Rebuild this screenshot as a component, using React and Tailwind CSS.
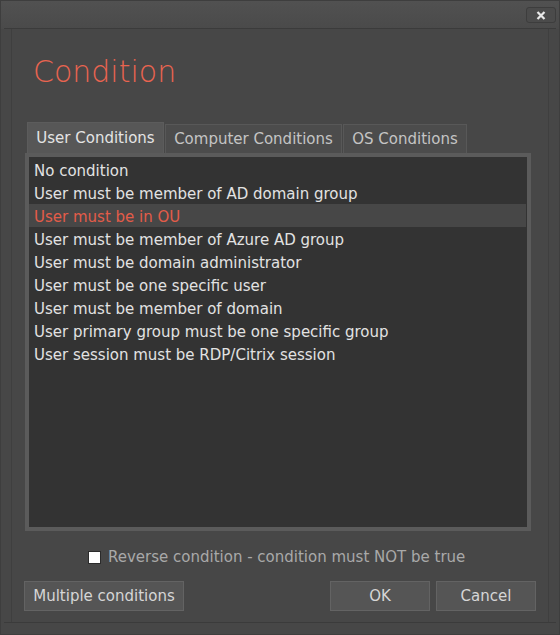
import { useState } from 'react';

const items = [
  'No condition',
  'User must be member of AD domain group',
  'User must be in OU',
  'User must be member of Azure AD group',
  'User must be domain administrator',
  'User must be one specific user',
  'User must be member of domain',
  'User primary group must be one specific group',
  'User session must be RDP/Citrix session',
];

const tabs = [
  { label: 'User Conditions', w: 'w-[137px]' },
  { label: 'Computer Conditions', w: 'w-[177px]' },
  { label: 'OS Conditions', w: 'w-[124px]' },
];

export default function App() {
  const [tab, setTab] = useState(0);
  const [sel, setSel] = useState(2);
  const [reverse, setReverse] = useState(false);

  return (
    <div className="w-[560px] h-[635px] flex flex-col bg-[#474747] border border-[#3e3e3e] text-[15px] text-[#e2e2e2] select-none" style={{ fontFamily: '"DejaVu Sans", sans-serif' }}>
      {/* title bar */}
      <div className="h-[28px] px-[3px] bg-gradient-to-b from-[#515151] to-[#4a4a4a]">
        <div className="h-full flex justify-end items-start border-b border-[#3b3b3b]">
          <button className="mt-[6px] mr-[0px] w-[30px] h-[16px] rounded-[3px] border border-[#3d3d3d] bg-[#4b4b4b] flex items-center justify-center">
            <svg width="10" height="9" viewBox="0 0 10 9">
              <path d="M1.5 1 L8.5 8 M8.5 1 L1.5 8" stroke="#e8e8e8" strokeWidth="2.2" />
            </svg>
          </button>
        </div>
      </div>

      {/* body */}
      <div className="flex-1 px-[3px] flex">
        <div className="flex-1 flex border-b border-[#3b3b3b] mb-[11px]">
          <div className="flex-1 mx-[7px] border-x border-[#3f3f3f] flex flex-col">
            <h1 className="ml-[21px] mt-[21px] text-[30px] leading-[44px] font-extralight text-[#ea6450]">Condition</h1>

            {/* tabs */}
            <div className="ml-[15px] mt-[28px] flex items-end gap-[1px] h-[31px]">
              {tabs.map((t, i) => (
                <button
                  key={t.label}
                  onClick={() => setTab(i)}
                  className={`${t.w} flex items-center justify-center border border-b-0 ${
                    i === tab ? 'h-[31px] bg-[#575757] border-[#5c5c5c] text-[#e4e4e4]' : 'h-[29px] bg-[#4c4c4c] border-[#585858] text-[#c4c4c4]'
                  }`}
                >
                  {t.label}
                </button>
              ))}
            </div>

            {/* list */}
            <div className="ml-[13px] w-[506px] h-[378px] border-[4px] border-[#5b5b5b] bg-[#333333] pt-[1px] pr-[1px]">
              {items.map((it, i) => (
                <div
                  key={it}
                  onClick={() => setSel(i)}
                  className={`h-[23px] pt-[3px] leading-[20px] pl-[5px] ${i === sel ? 'bg-[#474747] text-[#e35c49]' : ''}`}
                >
                  {it}
                </div>
              ))}
            </div>

            {/* checkbox */}
            <label className="ml-[76px] mt-[20px] flex items-center gap-[7px] text-[#a9a9a9] h-[13px]">
              <span
                onClick={() => setReverse(!reverse)}
                className="w-[13px] h-[13px] bg-white border border-[#2b2b2b] flex items-center justify-center text-[10px] text-black leading-none"
              >
                {reverse ? '✓' : ''}
              </span>
              <span>Reverse condition - condition must NOT be true</span>
            </label>

            {/* buttons */}
            <div className="mt-[17px] ml-[12px] mr-[12px] flex">
              <button className="w-[160px] h-[30px] bg-[#555555] border border-[#636363] text-[#d6d6d6]">Multiple conditions</button>
              <div className="flex-1" />
              <button className="w-[100px] h-[30px] bg-[#555555] border border-[#636363] text-[#d6d6d6]">OK</button>
              <button className="ml-[6px] w-[100px] h-[30px] bg-[#555555] border border-[#636363] text-[#d6d6d6]">Cancel</button>
            </div>
          </div>
        </div>
      </div>
    </div>
  );
}
